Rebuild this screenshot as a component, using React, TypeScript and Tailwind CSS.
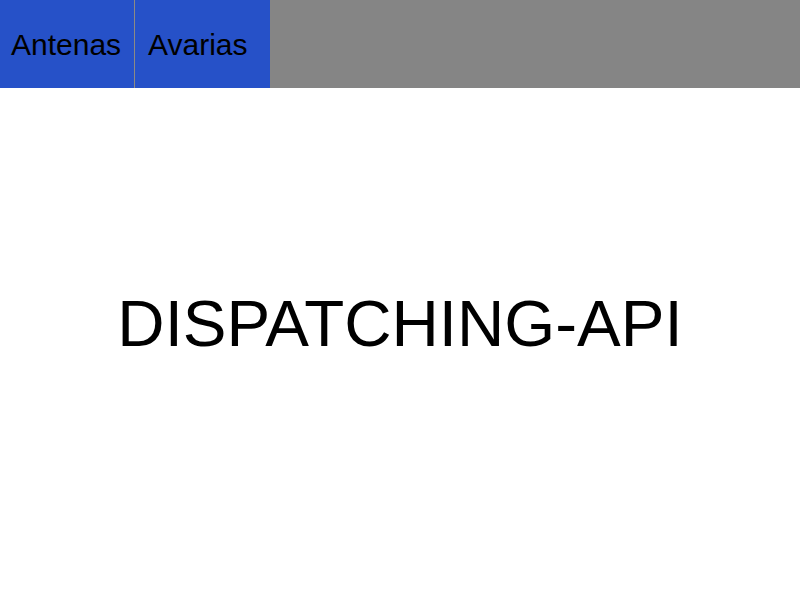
import React from "react";

export default function App() {
  return (
    <div className="w-[800px] h-[600px] bg-white flex flex-col" style={{ fontFamily: '"Comic Sans MS", "Liberation Sans", sans-serif' }}>
      <nav className="h-[88px] w-full bg-[#858585] flex">
        <div className="w-[135px] h-full bg-[#2651c8] border-r border-[#8c8a84] flex items-center pl-[11px] text-black text-[30px]">
          Antenas
        </div>
        <div className="w-[135px] h-full bg-[#2651c8] flex items-center pl-[13px] text-black text-[30px]">
          Avarias
        </div>
      </nav>
      <main className="flex-1 flex items-center justify-center pb-[40px]">
        <h1 className="text-[65.5px] leading-none text-black">DISPATCHING-API</h1>
      </main>
    </div>
  );
}
